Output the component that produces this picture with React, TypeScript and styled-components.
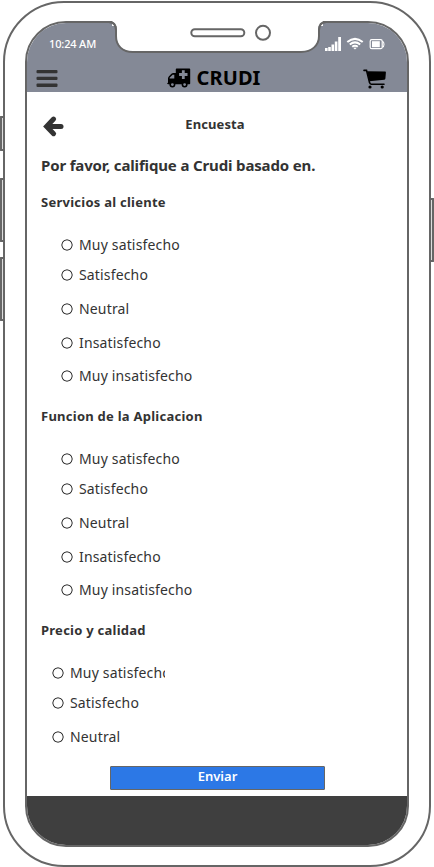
import React from "react";
import styled, { createGlobalStyle } from "styled-components";

const line = "#666666";
const slate = "#848996";
const ink = "#333333";

const GlobalStyle = createGlobalStyle`
  *, *::before, *::after { box-sizing: border-box; }
  body {
    margin: 0;
    background: #fff;
    font-family: "Noto Sans", "Open Sans", sans-serif;
    color: ${ink};
  }
`;

const Stage = styled.div`
  position: relative;
  width: 434px;
  height: 867px;
  padding: 1px 3px 0;
  overflow: hidden;
`;

const SideButton = styled.span<{ $side: "left" | "right"; $top: number; $height: number }>`
  position: absolute;
  ${({ $side }) => $side}: 0;
  top: ${({ $top }) => $top}px;
  width: 4px;
  height: ${({ $height }) => $height}px;
  border: 2px solid ${line};
  border-${({ $side }) => ($side === "left" ? "right" : "left")}: 0;
  border-radius: ${({ $side }) => ($side === "left" ? "1px 0 0 1px" : "0 1px 1px 0")};
  background: #ddd;
`;

const Phone = styled.div`
  position: relative;
  width: 428px;
  height: 866px;
  padding: 18px 20px;
  border: 2px solid ${line};
  border-radius: 61px;
  background: #fff;
`;

const Screen = styled.div`
  display: flex;
  flex-direction: column;
  width: 384px;
  height: 826px;
  border: 2px solid ${line};
  border-radius: 41px;
  background: #fff;
  overflow: hidden;
`;

const NotchLayer = styled.svg`
  position: absolute;
  top: 17px;
  left: 95px;
  width: 234px;
  height: 35px;
`;

const StatusBar = styled.div`
  flex: none;
  display: flex;
  justify-content: space-between;
  height: 41px;
  padding: 12px 21px 0 22px;
  background: ${slate};
  color: #fff;
`;

const Clock = styled.span`
  font-size: 11px;
  font-weight: 500;
  line-height: 18px;
  letter-spacing: -0.15px;
`;

const Toolbar = styled.header`
  flex: none;
  display: grid;
  grid-template-columns: 80px 1fr 80px;
  height: 28px;
  padding: 3px 20px 0 9px;
  background: ${slate};
`;

const MenuIcon = styled.svg`
  width: 22px;
  height: 22px;
  margin-top: 1px;
`;

const Brand = styled.h1`
  display: flex;
  justify-content: center;
  gap: 6px;
  margin: 0;
  padding-left: 4px;
  color: #000;
  font-size: 20px;
  font-weight: 700;
  line-height: 21px;
  letter-spacing: 0.1px;
  white-space: nowrap;
`;

const AmbulanceIcon = styled.svg`
  width: 24px;
  height: 20px;
  margin-top: 1px;
`;

const CartIcon = styled.svg`
  justify-self: end;
  width: 24px;
  height: 20px;
  margin-top: 2px;
`;

const Survey = styled.main`
  flex: 1;
  min-height: 0;
  display: flex;
  flex-direction: column;
  padding: 22px 14px 0;
`;

const TitleRow = styled.div`
  display: grid;
  grid-template-columns: 24px 1fr 24px;
  height: 26px;
`;

const Title = styled.h2`
  margin: 0;
  padding-right: 4px;
  text-align: center;
  font-size: 13px;
  font-weight: 700;
  line-height: 20px;
  letter-spacing: 0.1px;
`;

const Prompt = styled.p`
  margin: 15px 0 17px;
  font-size: 15px;
  font-weight: 700;
  line-height: 20px;
  letter-spacing: -0.15px;
  white-space: nowrap;
`;

const Group = styled.section`
  flex: none;
  height: 214px;
  &:last-of-type {
    height: 146px;
  }
`;

const GroupTitle = styled.h3`
  margin: 0 0 23px;
  font-size: 13px;
  font-weight: 700;
  line-height: 20px;
  letter-spacing: 0.25px;
`;

const Options = styled.div<{ $indent: number }>`
  display: grid;
  grid-template-rows: 30px 34px 34px 33px 20px;
  align-items: start;
  margin-left: ${({ $indent }) => $indent}px;
`;

const Option = styled.label<{ $width?: number }>`
  display: flex;
  align-items: center;
  gap: 6px;
  width: ${({ $width }) => ($width ? `${$width}px` : "auto")};
  height: 20px;
  overflow: hidden;
  font-size: 14px;
  line-height: 20px;
  letter-spacing: 0.16px;
  white-space: nowrap;
`;

const Radio = styled.input`
  appearance: none;
  flex: none;
  width: 12px;
  height: 12px;
  margin: 0;
  border: 0;
  border-radius: 50%;
  background: radial-gradient(circle, #fff 4.2px, #3d3d3d 4.9px, #3d3d3d 5.3px, transparent 6px);
`;

const Submit = styled.button`
  flex: none;
  align-self: center;
  width: 215px;
  height: 24px;
  padding: 0 0 3px 1px;
  border: 1px solid ${line};
  border-radius: 1px;
  background: #2c78e6;
  color: #fff;
  font-family: inherit;
  font-size: 13px;
  font-weight: 600;
  line-height: 19px;
`;

const BottomBar = styled.footer`
  flex: none;
  height: 49px;
  background: #3f3f3f;
`;

const all = ["Muy satisfecho", "Satisfecho", "Neutral", "Insatisfecho", "Muy insatisfecho"];

const groups = [
  { name: "servicio", title: "Servicios al cliente", indent: 20, options: all },
  { name: "funcion", title: "Funcion de la Aplicacion", indent: 20, options: all },
  { name: "precio", title: "Precio y calidad", indent: 11, options: all.slice(0, 3), firstWidth: 113 },
];

const Notch = () => (
  <NotchLayer viewBox="100 20 234 35" fill="none" stroke={line} strokeWidth="2">
    <path d="M112 20H323V26H112Z" fill="#fff" stroke="none" />
    <path
      d="M107 22H109C114 22 116 25 116 30V36C116 46 123 52 133 52H301C312 52 319 45 319 36V30C319 25 321 22 326 22H328"
      stroke={line}
    />
    <path
      d="M112 20H323V22Q318 24 318 30V36C318 45 311 51 301 51H133C123 51 117 45 117 36V30Q117 24 112 21Z"
      fill="#fff"
      stroke="none"
    />
    <path d="M107 22H109C114 22 116 25 116 30V36M319 36V30C319 25 321 22 326 22H328" />
    <rect x="191.3" y="29.3" width="53" height="7" rx="3.5" />
    <circle cx="263" cy="32.8" r="7" />
  </NotchLayer>
);

const StatusIcons = () => (
  <svg width="62" height="18" viewBox="324 36 62 18" fill="#fff">
    <path d="M325 49h2.6v3H325zM328.2 48h2.6v4h-2.6zM331.5 45.6h2.6V52h-2.6zM334.8 42.4h2.6V52h-2.6zM338.2 38h2.8v14h-2.8z" />
    <g fill="none" stroke="#fff" strokeWidth="2">
      <path d="M347.3 43.1Q355 36.6 362.7 43.1" />
      <path d="M349.8 45.5Q355 41.2 360.2 45.5" />
      <path d="M352.2 47.8Q355 45.6 357.8 47.8" />
    </g>
    <path d="M353.4 49Q355 47.8 356.6 49L355 50.6z" />
    <rect x="370.2" y="40.7" width="12" height="9" rx="1.5" fill="none" stroke="#fff" strokeWidth="1.2" />
    <rect x="372" y="42.2" width="7.8" height="6" />
    <path d="M382.4 42.2q1.6.6 1.6 3t-1.6 3" fill="none" stroke="#fff" strokeWidth="1.1" />
  </svg>
);

const Ambulance = () => (
  <AmbulanceIcon viewBox="166 68 24 20">
    <path
      fillRule="evenodd"
      d="M175.6 68.5H188.4Q189.2 68.5 189.2 69.3V83.5Q189.2 84.3 188.4 84.3H167.2Q166.2 84.3 166.2 83.5Q166.2 82.7 167 82.7V78.4Q167 77.2 167.8 76.4L170.4 73.8Q171.2 73 172.4 73H174.8V69.3Q174.8 68.5 175.6 68.5ZM168.6 78.4H173.3V74.7H171.6L168.6 77.7ZM180.9 70.3V73.1H178.1V76.1H180.9V78.9H183.7V76.1H186.5V73.1H183.7V70.3Z"
    />
    <g stroke="#000" strokeWidth="1.6" fill={slate}>
      <circle cx="171.4" cy="84.6" r="2.2" />
      <circle cx="183.6" cy="84.6" r="2.2" />
    </g>
  </AmbulanceIcon>
);

const Cart = () => (
  <CartIcon viewBox="364 69 24 20">
    <path d="M368 71.3L386.2 71.6Q387 71.7 386.9 72.5L386.4 78.6Q386.3 79.5 385.4 79.7L370.4 81.2Z" />
    <path
      d="M365 70.4H367.5L370.6 82.7Q370.9 84.2 372.3 84.2H385"
      fill="none"
      stroke="#000"
      strokeWidth="1.6"
      strokeLinecap="round"
    />
    <circle cx="371" cy="87" r="1.6" />
    <circle cx="383.2" cy="87" r="1.6" />
  </CartIcon>
);

const BackArrow = () => (
  <svg width="24" height="24" viewBox="0 0 24 24" fill="none" stroke={ink} strokeWidth="5" strokeLinecap="round">
    <path d="M20 12.4H7" />
    <path d="M12.6 5.1L5.6 12.4L12.6 19.7" />
  </svg>
);

export default function App() {
  return (
    <Stage>
      <GlobalStyle />
      <SideButton $side="left" $top={116} $height={35} />
      <SideButton $side="left" $top={178} $height={64} />
      <SideButton $side="left" $top={257} $height={64} />
      <SideButton $side="right" $top={198} $height={64} />
      <Phone>
        <Screen>
          <StatusBar>
            <Clock>10:24 AM</Clock>
            <StatusIcons />
          </StatusBar>
          <Toolbar>
            <MenuIcon viewBox="0 0 22 22" fill={ink}>
              <rect x="0.5" y="2" width="21" height="3.3" rx="1" />
              <rect x="0.5" y="8.7" width="21" height="3.3" rx="1" />
              <rect x="0.5" y="15.6" width="21" height="3.3" rx="1" />
            </MenuIcon>
            <Brand>
              <Ambulance />
              CRUDI
            </Brand>
            <Cart />
          </Toolbar>
          <Survey>
            <TitleRow>
              <BackArrow />
              <Title>Encuesta</Title>
            </TitleRow>
            <Prompt>Por favor, califique a Crudi basado en.</Prompt>
            {groups.map((group) => (
              <Group key={group.name}>
                <GroupTitle>{group.title}</GroupTitle>
                <Options $indent={group.indent}>
                  {group.options.map((label, i) => (
                    <Option key={label} $width={i === 0 ? group.firstWidth : undefined}>
                      <Radio type="radio" name={group.name} />
                      {label}
                    </Option>
                  ))}
                </Options>
              </Group>
            ))}
            <Submit>Enviar</Submit>
          </Survey>
          <BottomBar />
        </Screen>
        <Notch />
      </Phone>
    </Stage>
  );
}
